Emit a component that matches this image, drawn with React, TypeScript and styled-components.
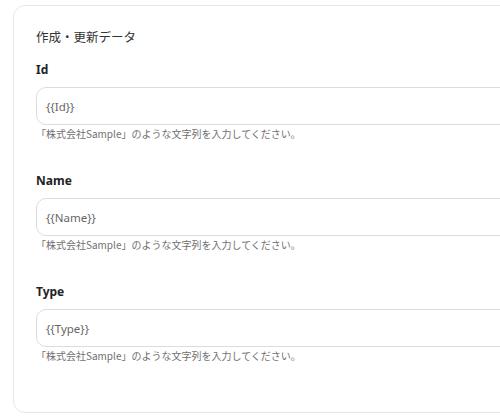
import React from "react";
import styled, { createGlobalStyle } from "styled-components";

const Global = createGlobalStyle`
  html, body { margin: 0; padding: 0; background: #fff; overflow: hidden; }
  body { font-family: "Noto Sans", "Noto Sans CJK JP", sans-serif; }
`;

const Page = styled.div`
  width: 500px;
  height: 419px;
  overflow: hidden;
  padding: 5px 0 0 13px;
  box-sizing: border-box;
`;

const Card = styled.section`
  width: 540px;
  height: 408px;
  box-sizing: border-box;
  border: 1px solid #e6e6e6;
  border-radius: 12px;
  padding: 22px 30px 50px 22px;
  display: flex;
  flex-direction: column;
`;

const Title = styled.h2`
  margin: 0 0 16px;
  font-size: 12.5px;
  line-height: 18px;
  font-weight: 400;
  color: #333;
  font-family: "Noto Sans CJK JP", sans-serif;
`;

const Field = styled.div`
  display: flex;
  flex-direction: column;
  & + & { margin-top: 32px; }
`;

const Label = styled.label`
  font-size: 12px;
  line-height: 16px;
  font-weight: 700;
  color: #222;
  margin-bottom: 9px;
`;

const InputBox = styled.div`
  height: 38px;
  box-sizing: border-box;
  border: 1px solid #dcdcdc;
  border-radius: 10px;
  padding: 0 9px;
  display: flex;
  align-items: center;
  font-size: 11.5px;
  color: #666;
`;

const Help = styled.div`
  margin-top: 2px;
  font-size: 10px;
  line-height: 14px;
  color: #707070;
  font-family: "Noto Sans CJK JP", sans-serif;
`;

const fields = ["Id", "Name", "Type"];

export default function App() {
  return (
    <>
      <Global />
      <Page>
        <Card>
          <Title>作成・更新データ</Title>
          {fields.map((f) => (
            <Field key={f}>
              <Label>{f}</Label>
              <InputBox>{`{{${f}}}`}</InputBox>
              <Help>「株式会社Sample」のような文字列を入力してください。</Help>
            </Field>
          ))}
        </Card>
      </Page>
    </>
  );
}
